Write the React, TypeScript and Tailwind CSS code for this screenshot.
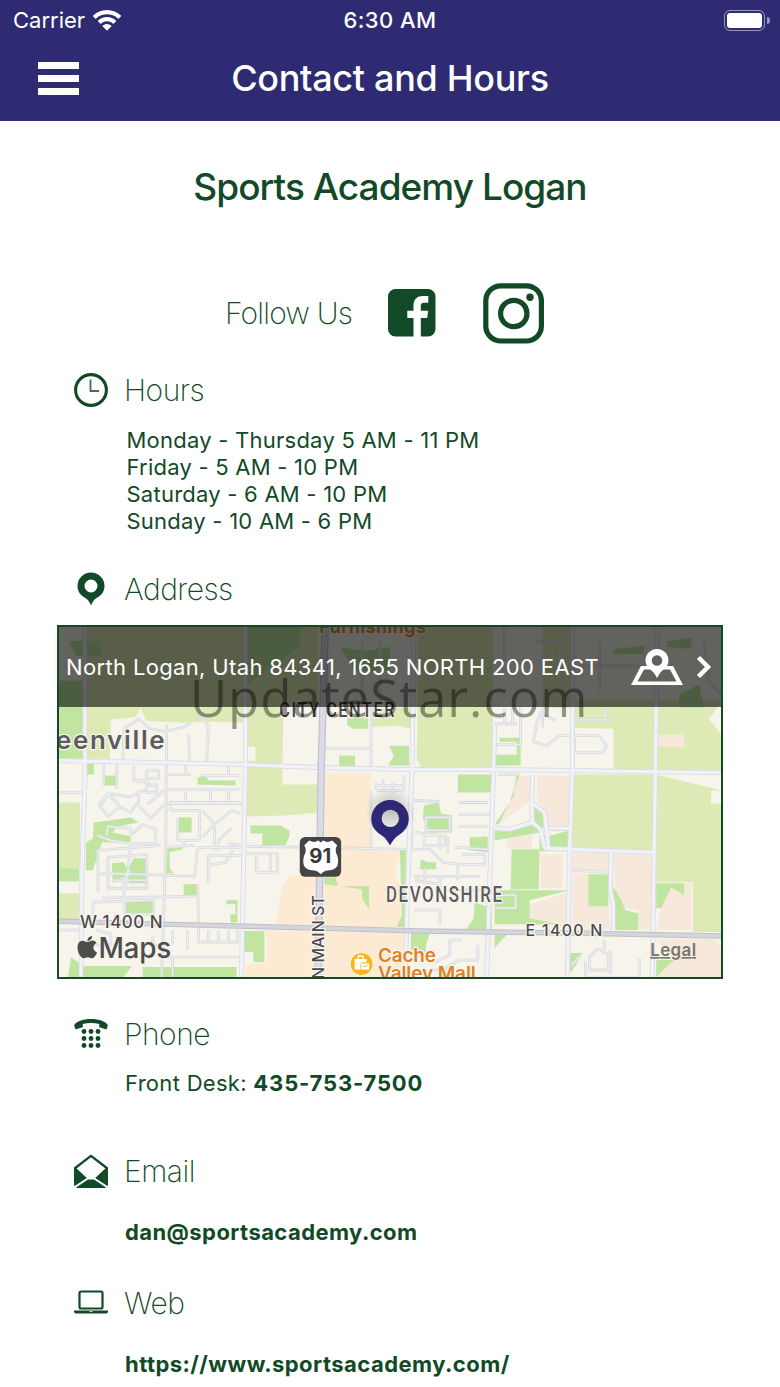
import type { ReactNode } from 'react';

const hours = [
  'Monday - Thursday 5 AM - 11 PM',
  'Friday - 5 AM - 10 PM',
  'Saturday - 6 AM - 10 PM',
  'Sunday - 10 AM - 6 PM',
];

// Map areas, grouped by fill colour
const fields = [
  '86,625 245,625 245,722 205,721 180,722 145,720 140,707 135,716 110,719 109,758 86,758',
  '245,625 318,625 318,706 283,706 282,784 318,784 318,812 285,815 245,816 245,768 243,760 255,760 255,746 245,746',
  '371,707 411,707 411,728 396,725 372,726',
  '418,625 493,625 493,768 422,768 417,758',
  '543,625 572,625 572,707 543,707',
  '572,700 723,700 710,718 723,735 723,770 614,770 614,728 573,727',
  '572,774 655,774 655,852 615,850 572,847',
  '657,774 723,790 712,790 712,803 723,803 723,932 694,932 694,882 657,882',
  '58,802 79,802 79,868 58,868',
  '58,893 78,893 78,919 58,919',
];

const parks = [
  '58,680 83,680 83,758 58,758',
  '68,640 100,640 100,655 75,655',
  '86,763 93,763 93,774 85,774',
  '103,775 117,775 117,785 103,785',
  '197,777 205,775 208,780 235,780 235,785 197,784',
  '245,625 300,625 300,645 245,685',
  '340,646 365,650 390,646 390,670 355,670',
  '347,717 368,717 368,728 352,728 347,724',
  '339,755 355,755 355,766 339,766',
  '389,745 409,745 409,765 388,765 394,755',
  '458,774 493,774 493,792 458,792',
  '93,822 130,817 138,822 116,826 112,832 130,836 130,842 101,842 92,870 85,870 85,842 92,838',
  '111,863 123,862 127,869 133,858 145,858 146,883 129,883 122,877 112,883',
  '178,817 191,817 191,832 178,832',
  '167,848 182,846 182,849 169,852 169,868 173,873 165,873',
  '183,884 197,884 197,895 183,895',
  '58,868 78,868 78,881 58,881',
  '124,900 153,900 153,914 124,914',
  '226,900 237,900 237,922 230,922 230,914 235,914 235,904 226,904',
  '250,825 280,825 289,830 289,836 285,845 262,845 262,833 250,833',
  '243,931 264,931 264,962 253,962 253,952 243,952',
  '70,957 82,966 131,966 122,978 67,978',
  '142,967 236,967 236,978 142,978',
  '324,877 335,877 338,886 369,886 369,909 362,898 362,889 324,884',
  '400,849 406,849 405,927 397,927 402,915 401,890',
  '424,805 439,802 441,813 452,815 452,832 430,832 423,818',
  '470,837 488,836 488,852 470,850',
  '421,859 428,862 436,862 436,869 420,869',
  '411,933 430,933 426,945 426,958 411,950',
  '475,902 492,908 492,930 466,930 474,918',
  '500,737 521,737 521,765 495,765 495,754 517,754 517,741 500,741',
  '517,774 520,774 510,802 499,824 495,824 514,796',
  '495,828 532,824 547,836 570,830 570,851 540,851 540,832 495,840',
  '512,849 540,849 539,889 511,889',
  '533,803 547,812 548,827 541,827 533,820',
  '495,890 570,890 530,900 530,918 560,924 495,924',
  '589,874 609,874 609,906 589,906',
  '614,886 622,900 626,910 639,913 639,930 614,930',
  '657,883 685,883 685,895 672,887 662,908 657,908',
  '570,953 583,953 577,964 572,972 570,972',
  '657,960 675,960 657,977',
  '495,935 507,935 495,948',
  '615,648 645,645 645,653 615,653',
  '668,640 692,637 692,648 668,646',
  '680,694 700,684 705,707 680,707',
];

const shops = [
  '324,772 371,772 371,850 403,851 395,870 404,900 399,927 324,926',
  '290,875 318,872 318,926 276,924 281,888',
  '266,930 405,932 405,978 245,978 245,964 266,962',
];

const campus = [
  '517,775 533,775 531,800 499,824 510,802',
  '538,775 570,775 570,828 548,828 547,812 537,800',
  '657,734 685,734 685,747 657,745',
  '573,852 611,852 611,870 573,870',
  '541,854 563,854 563,888 541,888',
  '570,892 530,904 530,917 524,924 570,928',
  '573,873 589,873 589,906 609,906 611,930 573,930',
  '614,853 655,853 655,930 640,930 639,910 626,908 617,898',
  '662,904 662,895 673,887 685,895 685,882 693,884 693,930 658,930',
  '515,832 532,832 532,848 507,848 507,841',
  '657,939 715,939 723,948 723,978 657,978 675,960',
];

const avenues = [
  'M58 760L165 762L245 764L320 767L410 769L495 769L572 770L723 772',
  'M84 625L84 780L81 870L80 978',
  'M245 625L245 764L241 978',
  'M414 625L412 769L409 850L405 978',
  'M658 625L656 780L653 978',
  'M573 625L573 770L570 853L568 978',
  'M495 724L494 769L491 850L487 978',
  'M545 848L655 852M545 848L541 829L533 822L510 829L495 828',
  'M533 775L532 802L545 812L549 847M533 822L532 802M549 828L570 828',
  'M612 850L611 890L614 905L614 930',
];

const streets = [
  'M166 724L165 850L161 978M122 760L123 728L138 718L149 728L165 731L184 726L190 722M196 710L208 725L206 762M188 733L189 762',
  'M103 763L103 785M116 763L116 788M133 765V780L150 783M133 780H145M146 770H158V778H146ZM146 785L156 784V792H146Z',
  'M166 774H190M201 775H240M166 789H240M185 762V775M185 789V803M210 789V803M228 762V776M228 789V803M166 803H241',
  'M58 792H82M100 805L108 793L130 796L146 789M98 804L107 816L119 806L107 793ZM119 806L130 812L136 803L150 818L163 805M138 790V803M147 804L163 790',
  'M106 835L107 826L130 828V835L142 824L155 829V843H130M96 835L110 840L130 843L127 872L124 890',
  'M97 892V850L160 845M107 890V857L146 854V888H107M98 873L145 874L194 876L197 847M123 898V880L129 870M112 880H145M101 898L196 896',
  'M92 920V902L155 900M124 900V914H153V900M197 884L198 925M197 847H240M166 847L194 845M183 847V838M177 818V840H199V810H170V802H240',
  'M202 810L214 824L202 836M214 824L231 810L240 813M214 824V850M227 843L240 845M208 882V855H240M208 865L225 862L232 850M218 851V840L231 828',
  'M172 930V945M187 930V950M198 928V942H237V930M208 930V942M218 930V942M228 930V942M160 957H238M152 935V945H160M172 958V978M95 930L110 934V945H90M58 930H80',
  'M244 846L315 847L410 849L414 850M244 853H277V872H256V853M270 853V872',
  'M324 748H371V707M371 748V767M412 769V850M371 790V848',
  'M376 782V790M383 779V790M376 785H405M393 782V793M376 790H405M404 775V792',
  'M414 800L440 801M426 817H450V830H426ZM459 802H488M459 814H490M459 826H488M415 832L440 835V849M424 835H445V845H424ZM415 849H430L443 862L462 864H486M455 847L490 849M462 854H485V864M448 853V836',
  'M414 876H480M425 868V884M440 876V890M458 864V880M414 910H440V925M450 890H488M415 880L440 884',
  'M495 744H521V705M505 707V724M513 707V724M495 723H517M543 727V707M556 720L541 712L537 723L534 741L547 745L560 735H600L607 745L604 752H575V737M572 719H614M606 707V719',
  'M498 774H518M573 870L610 872M495 895H516V908H495M599 948L590 957L590 970L609 970V955L599 948M586 961V978H640V958M611 950V975M605 940V952M572 965L582 955',
  'M435 962L450 955V940H462M445 968L460 960H478V945M430 970H450M505 625V660M535 640H560V690M600 640V690M560 665H640M705 640L710 680L723 695M362 640V700M380 640V700',
];

function RoadMap() {
  return (
    <svg
      viewBox="58 626 664 351"
      className="block h-full w-full"
      fontFamily="Inter, 'Liberation Sans', sans-serif"
      role="img"
      aria-label="Map of North Logan"
    >
      <rect x="58" y="626" width="664" height="351" fill="#f6f4eb" />
      {fields.map((points) => <polygon key={points} points={points} fill="#deeab6" />)}
      {shops.map((points) => <polygon key={points} points={points} fill="#fcebd2" />)}
      {campus.map((points) => <polygon key={points} points={points} fill="#f6e9db" />)}
      {parks.map((points) => <polygon key={points} points={points} fill="#bfe5a0" />)}

      <g fill="none" strokeLinejoin="round">
        {streets.map((d) => <path key={d} d={d} stroke="#d9dadf" strokeWidth="2.8" />)}
        {streets.map((d) => <path key={d} d={d} stroke="#ededf1" strokeWidth="1.2" />)}
        {avenues.map((d) => <path key={d} d={d} stroke="#d9dbe3" strokeWidth="5" />)}
        {avenues.map((d) => <path key={d} d={d} stroke="#f1f2f8" strokeWidth="3.4" />)}
        <path d="M58 921L160 924L320 928L420 931L570 933L722 936" stroke="#bfc0c8" strokeWidth="5.5" />
        <path d="M58 921L160 924L320 928L420 931L570 933L722 936" stroke="#d3d4dc" strokeWidth="3.5" />
        <path d="M325 625L321 767L318 978" stroke="#c2c3ce" strokeWidth="7.5" />
        <path d="M325 625L321 767L318 978" stroke="#dadbe6" strokeWidth="5" />
      </g>

      <g stroke="#f8f6ee" strokeWidth="2.5" paintOrder="stroke" strokeLinejoin="round">
        <text x="319" y="632" fontSize="18" fontWeight="600" fill="#e8842b" textLength="107">Furnishings</text>
        <text x="55" y="748" fontSize="26" fontWeight="600" fill="#5d5d5f" textLength="109">eenville</text>
        <g fontFamily="Roboto, 'Liberation Sans', sans-serif" fontWeight="500" letterSpacing="2">
          <text x="279" y="716" fontSize="21" fill="#4a4a4c" textLength="117" lengthAdjust="spacingAndGlyphs">CITY CENTER</text>
          <text x="386" y="902" fontSize="21.5" fill="#5c5c60" textLength="118" lengthAdjust="spacingAndGlyphs">DEVONSHIRE</text>
        </g>
        <text x="79" y="928" fontSize="17" fontWeight="500" fill="#4a4a4c" textLength="83">W 1400 N</text>
        <text x="526" y="936" fontSize="16" fontWeight="500" fill="#4a4a4c" textLength="77">E 1400 N</text>
        <text transform="translate(324 979) rotate(-90)" fontSize="16" fontWeight="500" fill="#4a4a4c" textLength="84">N MAIN ST</text>
        <text x="378" y="962" fontSize="19" fontWeight="600" fill="#df8226" textLength="58">Cache</text>
        <text x="378" y="980" fontSize="19" fontWeight="600" fill="#df8226" textLength="98">Valley Mall</text>
      </g>

      {/* US route shield */}
      <rect x="299.5" y="836.500" width="41.500" height="40" rx="5.500" fill="#454545" />
      <path
        d="M309 840Q314 843 318 840L320.500 842L323 840Q327 843 332 840L337 845Q334 850 337 855Q339 861 337 866Q334 870 329 870Q324 870 320.500 874Q317 870 312 870Q307 870 304 866Q302 861 304 855Q307 850 304 845Z"
        fill="#fff"
      />
      <text x="309" y="863" fontSize="19.500" fontWeight="700" fill="#39393a" textLength="22" lengthAdjust="spacingAndGlyphs">91</text>

      {/* Location pin */}
      <defs>
        <radialGradient id="pinShade">
          <stop offset="0" stopColor="#555" stopOpacity=".4" />
          <stop offset="1" stopColor="#555" stopOpacity="0" />
        </radialGradient>
        <linearGradient id="pinHole" x1="0" y1="0" x2="0" y2="1">
          <stop offset="0" stopColor="#bfbfbd" />
          <stop offset="1" stopColor="#e8e7e2" />
        </linearGradient>
      </defs>
      <circle cx="390" cy="811" r="25" fill="url(#pinShade)" />
      <path d="M390 799.500a18.800 18.800 0 0 0-18.800 18.800c0 9 5.500 13.500 11.300 17.400 3 2 5.500 6 7.500 9.500 2-3.500 4.500-7.500 7.500-9.500 5.800-3.900 11.300-8.400 11.300-17.400A18.800 18.800 0 0 0 390 799.500z" fill="#2d2775" />
      <circle cx="390.300" cy="818" r="8.700" fill="url(#pinHole)" />

      {/* Shopping marker */}
      <circle cx="361.500" cy="964" r="11.500" fill="#f8b51b" stroke="#fdf3dc" strokeWidth="1" />
      <path d="M358 959v-2q0-1 1-1h3q1 0 1 1v2" fill="none" stroke="#fff" strokeWidth="1.500" />
      <path d="M354.500 959h12v3.500h-5v7h-7z" fill="#fff" />
      <rect x="360.500" y="963" width="9" height="7" rx="1" fill="#fff" stroke="#f8b51b" strokeWidth=".7" />
      <path d="M362.500 965q2.500 3.500 5 0" fill="none" stroke="#f8b51b" strokeWidth="1" />

      {/* Attribution */}
      <g fill="#4d4d4b">
        <path d="M91.800 940.500c-2.300 0-3.400 1.400-5.100 1.400-1.800 0-3.100-1.300-5.100-1.300-2.800 0-5 2.500-5 6.900 0 5.500 3.500 10.800 6.300 10.800 1.500 0 2.200-1 4-1s2.400 1 4 1c2.600 0 4.400-3.600 5.200-5.900-4.800-2.100-4.700-7.700-.3-9.500-1-1.500-2.500-2.400-4-2.400zM91.200 936c-3 .3-4.900 2.500-4.800 5 2.800-.1 5-2.300 4.800-5z" />
        <text x="97.500" y="958" fontSize="28" fontWeight="500" textLength="73">Maps</text>
      </g>
      <text x="651" y="956" fontSize="17" fontWeight="600" fill="#77776f" textLength="46" textDecoration="underline">Legal</text>
    </svg>
  );
}

function WifiIcon() {
  return (
    <svg viewBox="0 0 28 21" className="h-[21px] w-7" fill="#fff">
      <path d="M14 0C8.500 0 3.700 2.100.2 5.500a.6.600 0 0 0 0 .9l2 2c.3.300.7.300 1 0C6.100 5.800 9.800 4.300 14 4.300s7.900 1.500 10.800 4.100c.3.300.7.300 1 0l2-2a.6.600 0 0 0 0-.9C24.300 2.100 19.500 0 14 0z" />
      <path d="M14 7c-3.500 0-6.600 1.400-8.900 3.500a.6.600 0 0 0 0 .9l2.100 2.100c.3.300.7.200 1 0A8.600 8.600 0 0 1 14 11.300c2.200 0 4.200.8 5.800 2.200.3.200.7.300 1 0l2.100-2.100a.6.600 0 0 0 0-.9C20.600 8.400 17.500 7 14 7z" />
      <path d="M14 14c-1.600 0-3.100.6-4.200 1.500-.3.200-.3.600 0 .9l3.700 3.800c.3.300.7.300 1 0l3.700-3.800c.3-.3.300-.7 0-.9A6.600 6.600 0 0 0 14 14z" />
    </svg>
  );
}

function ClockIcon() {
  return (
    <svg viewBox="0 0 34 34" className="size-[34px]" fill="none" stroke="currentColor">
      <circle cx="17" cy="17" r="15.400" strokeWidth="3.100" />
      <path d="M16.500 6.500V18H25" strokeWidth="1.800" strokeOpacity=".8" />
    </svg>
  );
}

function PinIcon() {
  return (
    <svg viewBox="0 0 34 34" className="size-[34px]" fill="currentColor">
      <path
        fillRule="evenodd"
        d="M17 .5A13.500 13.500 0 0 0 3.500 14c0 6.300 4 10 8.200 12.300 2.500 1.400 4 4.200 5.300 7.200 1.300-3 2.800-5.800 5.300-7.200 4.200-2.300 8.200-6 8.200-12.300A13.500 13.500 0 0 0 17 .5zm0 7a6.500 6.500 0 1 1 0 13 6.500 6.500 0 0 1 0-13z"
      />
    </svg>
  );
}

function PhoneIcon() {
  return (
    <svg viewBox="0 0 34 34" className="size-[34px]" fill="currentColor">
      <path d="M17 2C9 2 1.500 4.500.1 8.300L1.200 11.700q.3.800 1.100.6l6-2q.8-.3.700-1.100L8.600 7q8.400-2.200 16.800 0L25 9.200q-.1.800.7 1.100l6 2q.8.200 1.100-.6l1.100-3.400C32.500 4.500 25 2 17 2z" />
      {[14.5, 21.5, 28.5].map((cy) => [10, 17, 24].map((cx) => <circle key={`${cx}-${cy}`} cx={cx} cy={cy} r="2.400" />))}
    </svg>
  );
}

function MailIcon() {
  return (
    <svg viewBox="0 0 34 34" className="size-[34px]" fill="currentColor">
      <path d="M1.200 14L17 1.800 32.800 14" fill="none" stroke="currentColor" strokeWidth="2.300" strokeLinejoin="round" />
      <path d="M0 13l1.800.7 11 10.300L.6 32Q0 31.500 0 30.500zM34 13l-1.800.7-11 10.300 12.200 8q.6-.5.600-1.500zM2 33.500l12-8h6l12 8q-.6.500-1.500.5h-27q-.9 0-1.500-.5z" />
    </svg>
  );
}

function LaptopIcon() {
  return (
    <svg viewBox="0 0 34 34" className="size-[34px]" fill="currentColor">
      <rect x="5.500" y="5.500" width="23" height="17" rx="1.500" fill="none" stroke="currentColor" strokeWidth="2.200" />
      <path fillRule="evenodd" d="M0 24.500h34v1q0 2-2 2H2q-2 0-2-2zM15.500 25.300v.8h3v-.8z" />
    </svg>
  );
}

function SectionHeading({ icon, children }: { icon: ReactNode; children: ReactNode }) {
  return (
    <div className="flex h-10 items-center gap-4">
      {icon}
      <h2 className="text-[30px] leading-10 font-extralight tracking-[-0.5px]">{children}</h2>
    </div>
  );
}

export default function App() {
  return (
    <div className="relative h-[1387px] w-[780px] overflow-hidden bg-white font-['Inter','Liberation_Sans',sans-serif] text-[#124a27]">
      <header className="h-[121px] bg-[#2f2b72] text-white">
        <div className="grid h-10 grid-cols-3 items-center pr-[10px] pl-[13px] text-[22px]">
          <div className="flex items-center gap-2">
            <span>Carrier</span>
            <WifiIcon />
          </div>
          <span className="pr-[3px] text-center font-medium tracking-[0.45px]">6:30 AM</span>
          <div className="flex items-center justify-end gap-0.5">
            <div className="h-[21px] w-[41px] rounded-[6px] border-[1.5px] border-white/50 p-[2px]">
              <div className="h-full rounded-[3px] bg-white" />
            </div>
            <div className="h-[7px] w-[3px] rounded-r-full bg-white/50" />
          </div>
        </div>
        <div className="grid h-[76px] grid-cols-[80px_1fr_80px] items-center">
          <button type="button" aria-label="Menu" className="mt-px ml-[38px] flex w-[41px] flex-col gap-[6.7px]">
            <span className="h-[6.5px] bg-white" />
            <span className="h-[6.5px] bg-white" />
            <span className="h-[6.5px] bg-white" />
          </button>
          <h1 className="text-center text-[36px] font-medium tracking-[-0.3px] whitespace-nowrap">Contact and Hours</h1>
        </div>
      </header>

      <main>
        <h2 className="pt-11 text-center text-[37px] leading-[44px] font-medium tracking-[-0.95px]">Sports Academy Logan</h2>

        <div className="mt-[73px] flex h-[62px] items-center pl-[225px]">
          <span className="w-[163px] text-[30px] font-extralight tracking-[-0.8px] whitespace-nowrap">Follow Us</span>
          <svg viewBox="0 0 48 48" className="size-12">
            <rect width="47.500" height="47.500" rx="7.500" fill="currentColor" />
            <path d="M25.500 48V29h-6.200v-7.300h6.200v-5.200c0-6.200 3.700-9.500 9.300-9.500h5.500v6.800h-3.800c-3.100 0-3.700 1.500-3.700 3.700v4.200h7.400l-1 7.300h-6.400V48z" fill="#fff" />
          </svg>
          <svg viewBox="0 0 62 62" className="ml-[47px] size-[62px]" fill="none" stroke="currentColor">
            <rect x="2.800" y="3.800" width="55.600" height="55.200" rx="15" strokeWidth="5.200" />
            <circle cx="30.800" cy="31.500" r="13.200" strokeWidth="5.200" />
            <circle cx="47" cy="15.300" r="3.700" fill="currentColor" stroke="none" />
          </svg>
        </div>

        <section className="mt-[26px] pl-[74px]">
          <SectionHeading icon={<ClockIcon />}>Hours</SectionHeading>
          <ul className="mt-[17px] pl-[52.5px] text-[22px] leading-[27px] tracking-[0.24px]">
            {hours.map((line) => <li key={line}>{line}</li>)}
          </ul>
        </section>

        <section className="mt-[34px]">
          <div className="pl-[74px]">
            <SectionHeading icon={<PinIcon />}>Address</SectionHeading>
          </div>
          <div className="relative mt-4 ml-[57px] h-[354px] w-[666px] border-2 border-[#124a27]">
            <RoadMap />
            <a className="absolute inset-x-0 top-0 flex h-20 items-center bg-black/60 pl-[7px] text-white">
              <span className="w-[565px] text-[22px] tracking-[0.35px] whitespace-nowrap">North Logan, Utah 84341, 1655 NORTH 200 EAST</span>
              <svg viewBox="0 0 52 38" className="h-[38px] w-[52px]" fill="#fff">
                <path fillRule="evenodd" d="M10 18h32l10 19H0zM13 21.500L6.500 33.500h39L39 21.500z" />
                <path
                  fillRule="evenodd"
                  d="M26 1a11.500 11.500 0 0 0-11.500 11.500c0 7 6.500 9.500 8.500 12.500l3 5 3-5c2-3 8.500-5.500 8.500-12.500A11.500 11.500 0 0 0 26 1zm0 6.200a5.300 5.300 0 1 1 0 10.600 5.300 5.300 0 0 1 0-10.600z"
                />
              </svg>
              <svg viewBox="0 0 16 24" className="ml-[13px] h-6 w-4" fill="none" stroke="#fff" strokeWidth="4.500">
                <path d="M2.500 2.500L12 12l-9.500 9.500" />
              </svg>
            </a>
          </div>
        </section>

        <section className="mt-[35px] pl-[74px]">
          <SectionHeading icon={<PhoneIcon />}>Phone</SectionHeading>
          <p className="mt-[14px] pl-[51px] text-[22px] leading-[30px] tracking-[0.3px]">
            Front Desk: <strong className="font-bold tracking-[0.85px]">435-753-7500</strong>
          </p>
        </section>

        <section className="mt-[53px] pl-[74px]">
          <SectionHeading icon={<MailIcon />}>Email</SectionHeading>
          <p className="mt-[26px] pl-[51px] text-[22px] leading-[30px] font-bold tracking-[0.42px]">dan@sportsacademy.com</p>
        </section>

        <section className="mt-[36px] pl-[74px]">
          <SectionHeading icon={<LaptopIcon />}>Web</SectionHeading>
          <p className="mt-[26px] pl-[51px] text-[22px] leading-[30px] font-bold tracking-[0.46px]">https://www.sportsacademy.com/</p>
        </section>
      </main>

      <div className="pointer-events-none absolute top-[663px] left-[190px] font-['Open_Sans',sans-serif] text-[51px] leading-[68px] tracking-[0.9px] whitespace-nowrap text-black/40">
        UpdateStar.com
      </div>
    </div>
  );
}
